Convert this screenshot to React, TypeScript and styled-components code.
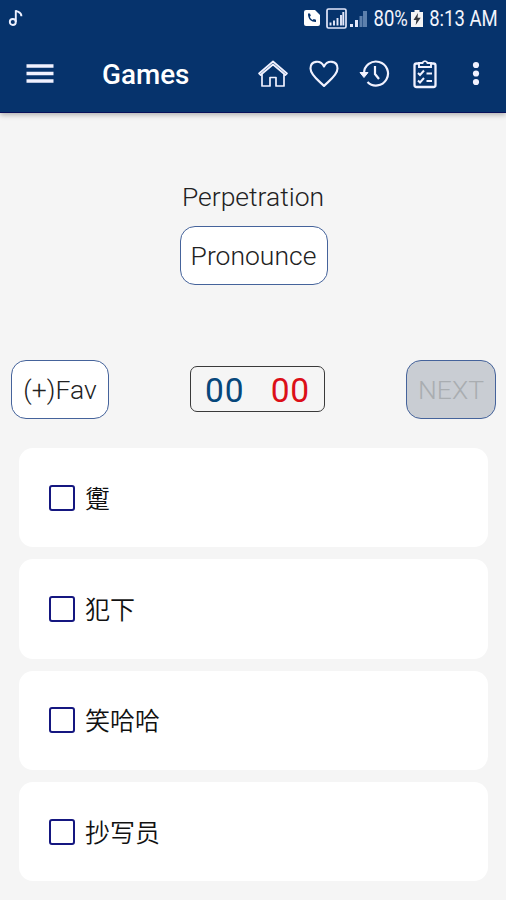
import React from "react";
import styled, { createGlobalStyle } from "styled-components";

const Global = createGlobalStyle`
  * { box-sizing: border-box; }
  body { margin: 0; background: #f5f5f5; font-family: Roboto, "Noto Sans CJK SC", sans-serif; }
`;
const Screen = styled.main`
  width: 506px;
  height: 900px;
  overflow: hidden;
  background: #f5f5f5;
`;
const Header = styled.header`
  height: 113px;
  background: #06336c;
  border-bottom: 1px solid #08105a;
  box-shadow: 0 2px 5px rgba(0, 0, 0, 0.28);
  color: #fff;
`;
const StatusBar = styled.div`
  height: 36px;
  display: flex;
  align-items: center;
  justify-content: space-between;
  padding: 0 8px;
`;
const StatusRight = styled.div`
  display: flex;
  align-items: center;
`;
const Graphic = styled.svg<{ $gap?: number }>`
  display: block;
  flex: none;
  margin-right: ${p => p.$gap ?? 0}px;
`;
const StatusText = styled.span<{ $pull: number; $gap?: number }>`
  font-size: 21.5px;
  line-height: 28px;
  padding-top: 1px;
  transform: scaleX(0.86);
  transform-origin: right center;
  margin-left: -${p => p.$pull}px;
  margin-right: ${p => p.$gap ?? 0}px;
  white-space: nowrap;
  color: #f2f4fc;
`;
const Toolbar = styled.div`
  height: 76px;
  display: flex;
  align-items: center;
  padding-left: 26px;
`;
const IconButton = styled.button`
  width: 32px;
  height: 32px;
  padding: 0;
  border: 0;
  background: none;
  color: #f1f2ff;
`;
const MenuButton = styled(IconButton)`
  width: 28px;
`;
const Title = styled.h1`
  margin: 0;
  padding: 2px 0 0 48px;
  width: 231px;
  font-size: 27.8px;
  line-height: 32px;
  font-weight: 500;
`;
const Actions = styled.div`
  display: flex;
  gap: 18.7px;
  align-items: center;
  margin-left: -28px;
`;
const Word = styled.div`
  margin-top: 67px;
  height: 34px;
  line-height: 34px;
  text-align: center;
  font-size: 26.5px;
  font-weight: 300;
  color: #222;
`;
const Button = styled.button<{ $w: number; $off?: boolean }>`
  display: block;
  width: ${p => p.$w}px;
  height: 59px;
  padding: 0;
  border: 1.5px solid #45639b;
  border-radius: 15px;
  background: ${p => (p.$off ? "#c9cdd3" : "#fff")};
  color: ${p => (p.$off ? "#a9adb1" : "#222")};
  font: 300 26.5px/57px Roboto, sans-serif;
  white-space: nowrap;
`;
const Center = styled.div`
  display: flex;
  justify-content: center;
  padding: 12px 0 0 1px;
  height: 146px;
`;
const Controls = styled.div`
  display: flex;
  justify-content: space-between;
  align-items: center;
  padding: 0 10px 0 11px;
  height: 59px;
`;
const Score = styled.div`
  display: flex;
  justify-content: space-between;
  width: 135px;
  height: 46px;
  margin-top: -1px;
  border: 1px solid #3a3a3a;
  border-radius: 7px;
  padding: 0 14px 0 14px;
  font: 400 33.5px/47px Roboto, sans-serif;
`;
const Count = styled.span<{ $c: string }>`
  color: ${p => p.$c};
  letter-spacing: 0.8px;
`;
const List = styled.div`
  display: grid;
  gap: 12px;
  padding: 29px 18px 0 19px;
`;
const Option = styled.label`
  display: flex;
  align-items: center;
  height: 99.3px;
  border-radius: 14px;
  background: #fff;
  padding-left: 30px;
  gap: 10px;
  font-size: 25px;
  color: #111;
`;
const Check = styled.span`
  width: 26px;
  height: 26px;
  border: 2px solid #151780;
  border-radius: 3px;
`;
const Label = styled.span`
  padding-bottom: 2px;
  font-weight: 350;
`;

const answers = ["躗", "犯下", "笑哈哈", "抄写员"];

function StatusIcons() {
  return (
    <>
      <Graphic width="16" height="18" viewBox="0 0 16 18" $gap={6}>
        <path d="M2 1h9l5 5v9a2 2 0 0 1-2 2H2a2 2 0 0 1-2-2V3a2 2 0 0 1 2-2Z" fill="#fff" />
        <path d="M4 5c0 5 3 8 8 8v-2.3l-2.3-.8-1 1C7 10 6.200 9 5.800 7.800l1-1L6 4.600H4Z" fill="#06336c" />
      </Graphic>
      <Graphic width="21" height="21" viewBox="0 0 21 21" $gap={3}>
        <rect x="1" y="1" width="19" height="19" rx="1.500" fill="none" stroke="#e4e8fb" strokeWidth="1.700" />
        <path d="M4.500 17.500v-3M8 17.500v-5M11.500 17.500v-7.500M15 17.500V7M17.300 17.500V4" stroke="#e4e8fb" strokeWidth="1.900" />
      </Graphic>
      <Graphic width="18" height="19" viewBox="0 0 18 19" $gap={6}>
        <path d="M0 18v-3h3v3ZM5 18v-7h3v7Z" fill="#e4e8fb" />
        <path d="M9.500 18V7h3v11ZM13 18V2h4v16Z" fill="#5d80ac" />
      </Graphic>
    </>
  );
}

export default function App() {
  return (
    <Screen>
      <Global />
      <Header>
        <StatusBar>
          <Graphic width="16" height="20" viewBox="0 0 16 20" fill="none" stroke="#eef1ff" strokeWidth="1.900">
            <circle cx="4.800" cy="14" r="3" />
            <path d="M7.800 14V2.200c.6 1.900 5.800 1.500 5.600 6" />
          </Graphic>
          <StatusRight>
            <StatusIcons />
            <StatusText $pull={6} $gap={3}>80%</StatusText>
            <Graphic width="12" height="19" viewBox="0 0 12 19" $gap={6}>
              <path d="M3.500 1h5v2H12v15H0V3h3.500Z" fill="#f5f5f5" />
              <path d="m7 4-4.500 7H5.400L4.700 16l5-7.200H6.500Z" fill="#34383e" />
            </Graphic>
            <StatusText $pull={11}>8:13 AM</StatusText>
          </StatusRight>
        </StatusBar>
        <Toolbar>
          <MenuButton aria-label="Menu">
            <Graphic width="28" height="32" stroke="currentColor" strokeWidth="3.400">
              <path d="M.5 8h27M.5 15.500h27M.5 23h27" />
            </Graphic>
          </MenuButton>
          <Title>Games</Title>
          <Actions>
            <IconButton aria-label="Home">
              <Graphic width="32" height="32" viewBox="0 0 32 32" fill="none" stroke="currentColor" strokeWidth="1.700" strokeLinejoin="round">
                <path d="M2 15.500 16 3.500l14 12-1.500 1.500L16 6.500 3.500 17ZM5 16v12h8v-8.500h6V28h8V16" />
              </Graphic>
            </IconButton>
            <IconButton aria-label="Favorites">
              <Graphic width="32" height="32" viewBox="0 0 32 32" fill="none" stroke="currentColor" strokeWidth="2.100" strokeLinejoin="round">
                <path d="M16 28C12 23.500 2.500 17.500 2.500 10.500c0-8 10-9 13.500-2 3.500-7 13.500-6 13.500 2C29.500 17.500 20 23.500 16 28Z" />
              </Graphic>
            </IconButton>
            <IconButton aria-label="History">
              <Graphic width="32" height="32" viewBox="0 0 32 32" fill="none" stroke="currentColor" strokeWidth="2.200">
                <path d="M6 15.500a12 12 0 1 1 3.500 8.500" />
                <path d="M17 8v8l4 5" />
                <path d="M2 14.500h8l-4 5Z" fill="currentColor" strokeWidth="1" />
              </Graphic>
            </IconButton>
            <IconButton aria-label="Tests">
              <Graphic width="32" height="32" viewBox="0 0 32 32" fill="none" stroke="currentColor" strokeWidth="2.300">
                <rect x="5.500" y="5.500" width="21" height="23.500" rx="2" />
                <path d="M10 9V5h3.500a2.600 2.600 0 0 1 5 0H22v4Z" fill="#06336c" strokeWidth="1.900" />
                <path d="m9 15 2 2 4-4.500M9 22.500l2 2 4-4.500M17.500 15.500H23M17.500 23H23" strokeWidth="2" />
              </Graphic>
            </IconButton>
            <IconButton aria-label="More">
              <Graphic width="32" height="32" viewBox="0 0 32 32" fill="currentColor">
                <circle cx="16" cy="7" r="3.100" />
                <circle cx="16" cy="15.500" r="3.100" />
                <circle cx="16" cy="24" r="3.100" />
              </Graphic>
            </IconButton>
          </Actions>
        </Toolbar>
      </Header>
      <Word>Perpetration</Word>
      <Center>
        <Button $w={148}>Pronounce</Button>
      </Center>
      <Controls>
        <Button $w={98}>(+)Fav</Button>
        <Score>
          <Count $c="#07477b">00</Count>
          <Count $c="#dc0f18">00</Count>
        </Score>
        <Button $w={90} $off>NEXT</Button>
      </Controls>
      <List>
        {answers.map(answer => (
          <Option key={answer}>
            <Check />
            <Label>{answer}</Label>
          </Option>
        ))}
      </List>
    </Screen>
  );
}
